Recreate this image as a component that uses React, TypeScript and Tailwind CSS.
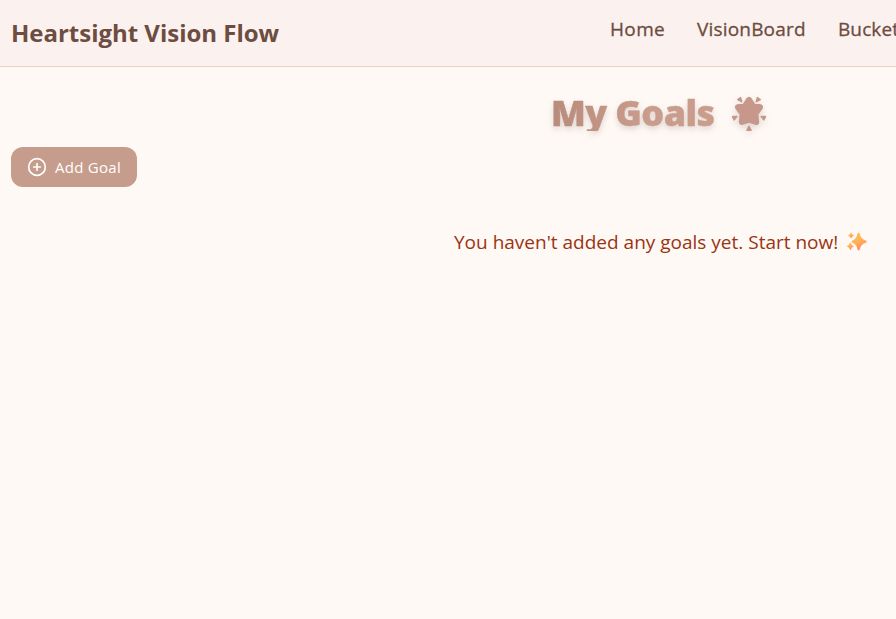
import { CirclePlus } from "lucide-react";

const links = [
  { label: "Home", style: "w-[55px] tracking-[0.35px]" },
  { label: "VisionBoard", style: "w-[109px] tracking-[0.18px]" },
  { label: "Bucket", style: "w-[100px] tracking-[0.1px]" },
];

function GlowingStar() {
  return (
    <svg viewBox="0 0 38 37" className="h-[37px] w-[38px]" aria-hidden="true">
      <g fill="#c6978a" stroke="#c6978a" strokeLinejoin="round">
        <path
          strokeWidth="6"
          d="M18 4.8 L21.6 10.6 L29 12.2 L24.3 18.6 L25.2 27 L18 24.6 L10.8 27 L11.7 18.6 L7 12.2 L14.4 10.6 Z"
        />
        <path
          strokeWidth="1.6"
          d="M6.8 4.6 L9.6 2.6 L10.6 6.6 Z M29.2 4.6 L26.4 2.6 L25.4 6.6 Z M1.6 21.6 L5.8 21.6 L3.2 24.8 Z M34.4 21.6 L30.2 21.6 L32.8 24.8 Z M18 31.4 L20 35.2 L16 35.2 Z"
        />
      </g>
    </svg>
  );
}

function Sparkles() {
  return (
    <svg viewBox="0 0 22 22" className="size-[22px]" aria-hidden="true">
      <defs>
        <linearGradient id="spark" x1="0.3" y1="0" x2="0.6" y2="1">
          <stop offset="0" stopColor="#fdbf50" />
          <stop offset="0.5" stopColor="#ffb257" />
          <stop offset="1" stopColor="#ff8468" />
        </linearGradient>
      </defs>
      <g fill="url(#spark)">
        <path d="M12.6 1.4 Q13.5 1.4 13.9 3.2 Q14.9 7.8 19.3 9.2 Q20.9 9.8 20.9 10.6 Q20.9 11.4 19.3 11.9 Q14.9 13.2 13.9 17.8 Q13.5 19.6 12.6 19.6 Q11.7 19.6 11.3 17.8 Q10.4 13.2 7 11.9 Q5.6 11.4 5.6 10.6 Q5.6 9.8 7 9.2 Q10.4 7.8 11.3 3.2 Q11.7 1.4 12.6 1.4 Z" />
        <path d="M5 1.3 Q5.8 3.7 8 4.4 Q5.8 5.1 5 7.5 Q4.2 5.1 2 4.4 Q4.2 3.7 5 1.3 Z" />
        <path d="M4.4 11.2 Q5.4 14.4 8 15.2 Q5.4 16 4.4 19.2 Q3.4 16 0.6 15.2 Q3.4 14.4 4.4 11.2 Z" />
      </g>
    </svg>
  );
}

export default function App() {
  return (
    <div className="h-[619px] w-full overflow-hidden bg-[#fff9f5] font-['Open_Sans','Noto_Sans',sans-serif]">
      <div className="w-[1320px]">
        <header className="flex h-[67px] items-start border-b border-[#efd3ca] bg-[#fbf2ef] pl-[11px] text-[#6d4c41]">
          <div className="mt-[17px] w-[599px] text-2xl leading-8 font-bold tracking-[-0.02px] whitespace-nowrap">
            Heartsight Vision Flow
          </div>
          <nav className="mt-[15px] flex gap-8 text-[19px] leading-7 font-medium">
            {links.map((link) => (
              <a
                key={link.label}
                className={"whitespace-nowrap [-webkit-text-stroke:0.3px_#6d4c41] " + link.style}
              >
                {link.label}
              </a>
            ))}
          </nav>
        </header>
        <main className="px-[11px] pt-6">
          <h1 className="flex h-10 justify-center gap-[15px] drop-shadow-[0_3px_3px_rgba(90,70,65,0.2)]">
            <span className="h-10 w-[165px] bg-linear-to-r from-[#b98b7b] to-[#c99c8c] to-60% bg-clip-text text-4xl leading-[44px] font-extrabold tracking-[-0.6px] whitespace-nowrap text-transparent [-webkit-text-stroke:0.4px_transparent]">
              My Goals
            </span>
            <span className="mt-1">
              <GlowingStar />
            </span>
          </h1>
          <button className="mt-4 flex h-10 w-[126px] items-center gap-2 rounded-xl bg-[#c69c8c] px-4 text-[15px] tracking-[0.28px] whitespace-nowrap text-white">
            <CirclePlus size={20} className="shrink-0" />
            <span>Add Goal</span>
          </button>
          <div className="mt-10 flex h-8 justify-center gap-2 pl-[2px] text-[19px] leading-[30px] text-[#9a3412]">
            <p className="w-[384px] whitespace-nowrap">You haven't added any goals yet. Start now!</p>
            <span className="mt-1">
              <Sparkles />
            </span>
          </div>
        </main>
      </div>
    </div>
  );
}
